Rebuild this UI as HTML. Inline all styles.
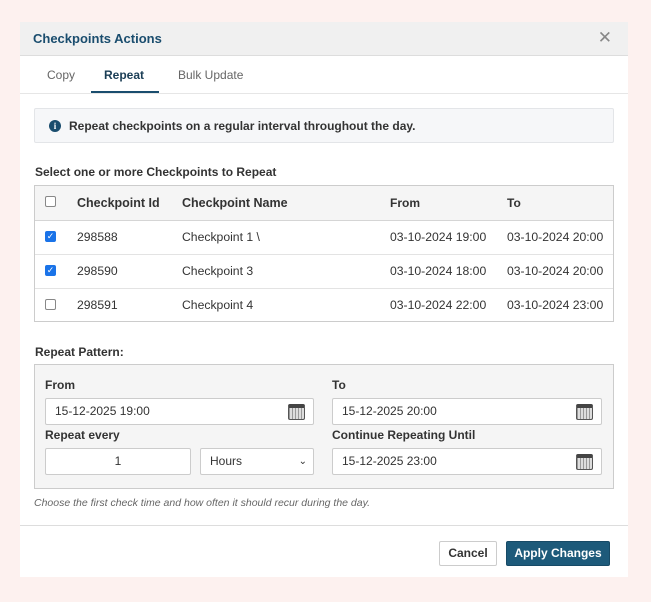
<!DOCTYPE html>
<html><head><style>
*{box-sizing:border-box;margin:0;padding:0}
body{width:651px;height:602px;background:#fdf1ef;font-family:"Liberation Sans",sans-serif;color:#333;font-size:12px;position:relative;overflow:hidden}
.m{position:absolute;left:20px;top:22px;width:608px;height:555px;background:#fff}
.hd{position:absolute;left:0;top:0;width:608px;height:34px;background:#f0f0f0;border-bottom:1px solid #ddd}
.t{position:absolute;left:13px;top:9px;font-size:13px;font-weight:bold;color:#1a4d6e}
.x{position:absolute;right:16px;top:6px;font-size:17px;color:#888;font-weight:300}
.tab{position:absolute;top:46px;font-size:12px;color:#666}
.a{position:absolute}
.info{left:14px;top:86px;width:580px;height:35px;background:#f6f7f9;border:1px solid #e3e5e8;border-radius:2px}
.ic{position:absolute;left:14px;top:11px;width:12px;height:12px;border-radius:50%;background:#1a4d6e;color:#fff;font-size:9px;font-weight:bold;text-align:center;line-height:12px;font-family:"Liberation Serif",serif}
.b{font-weight:bold}
.cb{position:absolute;width:11px;height:11px;border:1px solid #888;border-radius:2px;background:#fff}
.cb.on{background:#1a73e8;border-color:#1a73e8;color:#fff;font-size:9px;line-height:9px;text-align:center}
.row{position:absolute;left:0;width:578px;height:34px;border-top:1px solid #e3e3e3}
.row span{position:absolute;top:9px;font-size:12.2px}
.inp{position:absolute;height:27px;border:1px solid #ccc;background:#fff;border-radius:2px;padding-left:9px;line-height:25px;font-size:12px}
.cal{position:absolute;right:8px;top:5px;width:17px;height:16px;border:1px solid #555;background:repeating-linear-gradient(90deg,#999 0 1px,#ddd 1px 3px);border-top:4px solid #444;border-radius:2px}
.btn{position:absolute;top:519px;height:25px;border-radius:2px;font-weight:bold;font-size:12px;text-align:center;line-height:23px}
</style></head><body>
<div class="m">
<div class="hd"><div class="t">Checkpoints Actions</div><div class="x">✕</div></div>
<div class="tab" style="left:27px">Copy</div>
<div class="tab b" style="left:84px;color:#1a3d55">Repeat</div>
<div class="tab" style="left:158px">Bulk Update</div>
<div class="a" style="left:71px;top:69px;width:68px;height:2px;background:#1a4d6e"></div>
<div class="a" style="left:0;top:71px;width:608px;height:1px;background:#e6e6e6"></div>
<div class="a info"><div class="ic">i</div><span class="a b" style="left:34px;top:10px;font-size:12px">Repeat checkpoints on a regular interval throughout the day.</span></div>
<div class="a b" style="left:15px;top:143px">Select one or more Checkpoints to Repeat</div>
<div class="a" style="left:14px;top:163px;width:580px;height:137px;border:1px solid #ccc">
 <div class="row" style="top:0;border:0;background:#f5f5f5;height:34px"><div class="cb" style="left:10px;top:10px"></div><span class="b" style="left:42px;top:10px;font-size:12.5px">Checkpoint Id</span><span class="b" style="left:147px;top:10px;font-size:12.5px">Checkpoint Name</span><span class="b" style="left:355px;top:10px;font-size:12px">From</span><span class="b" style="left:472px;top:10px;font-size:12px">To</span></div>
 <div class="row" style="top:34px;border-top-color:#d5d5d5"><div class="cb on" style="left:10px;top:10px">✓</div><span style="left:42px">298588</span><span style="left:147px">Checkpoint 1 \</span><span style="left:355px">03-10-2024 19:00</span><span style="left:472px">03-10-2024 20:00</span></div>
 <div class="row" style="top:68px"><div class="cb on" style="left:10px;top:10px">✓</div><span style="left:42px">298590</span><span style="left:147px">Checkpoint 3</span><span style="left:355px">03-10-2024 18:00</span><span style="left:472px">03-10-2024 20:00</span></div>
 <div class="row" style="top:102px"><div class="cb" style="left:10px;top:10px"></div><span style="left:42px">298591</span><span style="left:147px">Checkpoint 4</span><span style="left:355px">03-10-2024 22:00</span><span style="left:472px">03-10-2024 23:00</span></div>
</div>
<div class="a b" style="left:15px;top:323px">Repeat Pattern:</div>
<div class="a" style="left:14px;top:342px;width:580px;height:125px;background:#f5f5f5;border:1px solid #ccc"></div>
<div class="a b" style="left:25px;top:356px">From</div>
<div class="a b" style="left:312px;top:356px">To</div>
<div class="inp" style="left:25px;top:376px;width:269px">15-12-2025 19:00<div class="cal"></div></div>
<div class="inp" style="left:312px;top:376px;width:270px">15-12-2025 20:00<div class="cal"></div></div>
<div class="a b" style="left:25px;top:406px">Repeat every</div>
<div class="a b" style="left:312px;top:406px">Continue Repeating Until</div>
<div class="inp" style="left:25px;top:426px;width:146px;text-align:center;padding:0">1</div>
<div class="inp" style="left:180px;top:426px;width:114px">Hours<span class="a" style="right:6px;top:0;font-size:10px">&#8964;</span></div>
<div class="inp" style="left:312px;top:426px;width:270px">15-12-2025 23:00<div class="cal"></div></div>
<div class="a" style="left:14px;top:475px;font-style:italic;font-size:10.5px;color:#666">Choose the first check time and how often it should recur during the day.</div>
<div class="a" style="left:0;top:503px;width:608px;height:1px;background:#ddd"></div>
<div class="btn" style="left:419px;width:58px;border:1px solid #ccc;background:#fff;color:#333">Cancel</div>
<div class="btn" style="left:486px;width:104px;background:#1d5a7a;color:#fff;border:1px solid #174a66">Apply Changes</div>
</div>
</body></html>
